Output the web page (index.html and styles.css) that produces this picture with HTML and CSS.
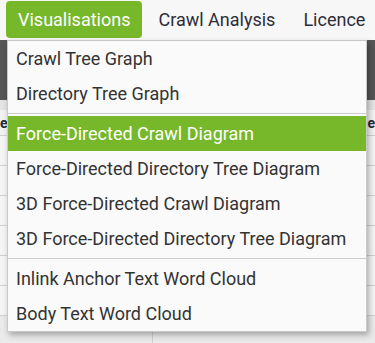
FILE: index.html
```html
<!DOCTYPE html>
<html>
<head>
<meta charset="utf-8">
<link rel="stylesheet" href="styles.css">
</head>
<body>
<nav class="nav">
  <span class="nav-item active">Visualisations</span>
  <span class="nav-item">Crawl Analysis</span>
  <span class="nav-item">Licence</span>
</nav>
<main class="content">
  <div class="dark-band"></div>
  <div class="gray-band"></div>
  <div class="head-row"><span class="head-l">e</span><span class="head-r">e</span></div>
  <div class="row"></div>
  <div class="row"></div>
  <div class="row"></div>
  <div class="row"></div>
  <div class="row"></div>
  <div class="row"></div>
  <div class="foot-row"><span class="foot-cell"></span></div>
</main>
<ul class="menu">
  <li class="menu-item">Crawl Tree Graph</li>
  <li class="menu-item">Directory Tree Graph</li>
  <li class="divider"></li>
  <li class="menu-item selected">Force-Directed Crawl Diagram</li>
  <li class="menu-item">Force-Directed Directory Tree Diagram</li>
  <li class="menu-item">3D Force-Directed Crawl Diagram</li>
  <li class="menu-item">3D Force-Directed Directory Tree Diagram</li>
  <li class="divider"></li>
  <li class="menu-item">Inlink Anchor Text Word Cloud</li>
  <li class="menu-item">Body Text Word Cloud</li>
</ul>
</body>
</html>
```
FILE: styles.css
```css
* { box-sizing: border-box; }
html, body { margin: 0; padding: 0; }
body {
  width: 375px;
  height: 343px;
  overflow: hidden;
  position: relative;
  font-family: Roboto, "Liberation Sans", sans-serif;
  font-size: 18px;
  color: #333;
  background: #ececec;
}
.nav {
  height: 40px;
  background: #f7f7f7;
  display: flex;
  align-items: flex-start;
  gap: 4px;
  padding: 1px 0 0 6px;
}
.nav-item {
  display: block;
  height: 37px;
  line-height: 37px;
  padding: 0 12px;
  color: #2d2d3a;
  border-radius: 4px;
  white-space: nowrap;
}
.nav-item.active {
  background: #76b82a;
  color: #fff;
}
.content {
  display: flex;
  flex-direction: column;
}
.dark-band { height: 60px; background: #555; }
.gray-band { height: 10px; background: #e4e4e4; }
.head-row {
  height: 26px;
  background: #f2f2f2;
  display: flex;
  justify-content: space-between;
  align-items: center;
  padding: 0 0 0 0;
  font-size: 14px;
  font-weight: bold;
  color: #1d2a3a;
  border-bottom: 1px solid #d0d0d0;
}
.head-r { margin-right: 0; }
.row {
  height: 30px;
  background: #f4f4f4;
  border-bottom: 1px solid #d0d0d0;
}
.foot-row {
  height: 30px;
  background: #eaeaea;
  display: flex;
}
.foot-cell { width: 153px; border-right: 1px solid #cfcfcf; }
.menu {
  position: absolute;
  left: 7px;
  top: 40px;
  width: 360px;
  margin: 0;
  padding: 0;
  list-style: none;
  background: #fafafa;
  border: 1px solid #c9c9c9;
  box-shadow: 2px 3px 6px rgba(0, 0, 0, 0.3);
}
.menu-item {
  height: 35px;
  line-height: 35px;
  padding: 0 8px;
  white-space: nowrap;
  color: #333;
}
.menu-item.selected {
  background: #76b82a;
  color: #fff;
}
.divider {
  height: 1px;
  margin: 2px 0;
  background: #cdcdcd;
}
```
